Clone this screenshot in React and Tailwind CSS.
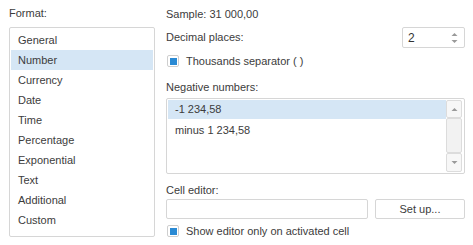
import React from 'react'

const formats = ['General', 'Number', 'Currency', 'Date', 'Time', 'Percentage', 'Exponential', 'Text', 'Additional', 'Custom']

const Check = ({ label }) => (
  <div className="flex items-center">
    <span className="ml-[1px] w-[12px] h-[12px] border border-[#cfcfcf] rounded-[2px] bg-white flex items-center justify-center">
      <span className="w-[7px] h-[7px] bg-[#2a8ad4]"></span>
    </span>
    <span className="ml-[7px]">{label}</span>
  </div>
)

const Tri = ({ down }) => (
  <svg width="7" height="5" viewBox="0 0 7 5">
    {down ? <path d="M0.5 1 L6.5 1 L3.5 4 Z" fill="#9a9a9a" /> : <path d="M3.5 1 L6.5 4 L0.5 4 Z" fill="#9a9a9a" />}
  </svg>
)

export default function App() {
  return (
    <div
      className="w-[473px] h-[245px] bg-white flex text-[11px] text-[#3c3c3c] overflow-hidden"
      style={{ fontFamily: '"Liberation Sans", Arial, sans-serif' }}
    >
      {/* left: format list */}
      <div className="ml-[9px] w-[146px] flex flex-col pt-[3px]">
        <div className="h-[20px] leading-[20px]">Format:</div>
        <div className="mt-[4px] h-[210px] border border-[#d6d6d6] rounded-[2px] pt-[2px] px-[1px]">
          {formats.map((f) => (
            <div
              key={f}
              className={`h-[20px] leading-[20px] pl-[7px] ${f === 'Number' ? 'bg-[#d5e6f5]' : ''}`}
            >
              {f}
            </div>
          ))}
        </div>
      </div>

      {/* right: options */}
      <div className="ml-[11px] w-[299px] flex flex-col pt-[4px]">
        <div className="h-[20px] leading-[20px]">Sample: 31 000,00</div>
        <div className="mt-[3px] h-[21px] flex items-center justify-between">
          <span>Decimal places:</span>
          <div className="w-[63px] h-[21px] border border-[#d6d6d6] rounded-[2px] flex items-center justify-between pl-[5px] pr-[6px]">
            <span className="text-[12px] text-[#333]">2</span>
            <div className="flex flex-col gap-[2px]">
              <Tri />
              <Tri down />
            </div>
          </div>
        </div>
        <div className="mt-[4px] h-[18px] flex items-center">
          <Check label="Thousands separator ( )" />
        </div>
        <div className="mt-[7px] h-[20px] leading-[20px]">Negative numbers:</div>
        <div className="mt-[1px] h-[76px] border border-[#d6d6d6] rounded-[2px] flex p-[1px]">
          <div className="flex-1 flex flex-col">
            <div className="h-[19px] leading-[19px] pl-[7px] bg-[#d5e6f5]">-1 234,58</div>
            <div className="h-[20px] leading-[20px] pl-[7px] mt-[1px]">minus 1 234,58</div>
          </div>
          <div className="w-[16px] flex flex-col mr-[1px]">
            <div className="h-[18px] border border-[#dcdcdc] rounded-[2px] bg-[#f7f7f7] flex items-center justify-center">
              <Tri />
            </div>
            <div className="flex-1 border border-[#dcdcdc] rounded-[2px] bg-[#f2f2f2]"></div>
            <div className="h-[19px] border border-[#dcdcdc] rounded-[2px] bg-[#f7f7f7] flex items-center justify-center">
              <Tri down />
            </div>
          </div>
        </div>
        <div className="mt-[8px] h-[17px] leading-[17px]">Cell editor:</div>
        <div className="h-[20px] flex gap-[7px]">
          <div className="w-[202px] border border-[#d6d6d6] rounded-[2px] bg-white"></div>
          <button className="flex-1 border border-[#d6d6d6] rounded-[2px] bg-white text-[#3c3c3c] leading-[18px]">
            Set up...
          </button>
        </div>
        <div className="mt-[5px] h-[14px] flex items-center">
          <Check label="Show editor only on activated cell" />
        </div>
      </div>
    </div>
  )
}
